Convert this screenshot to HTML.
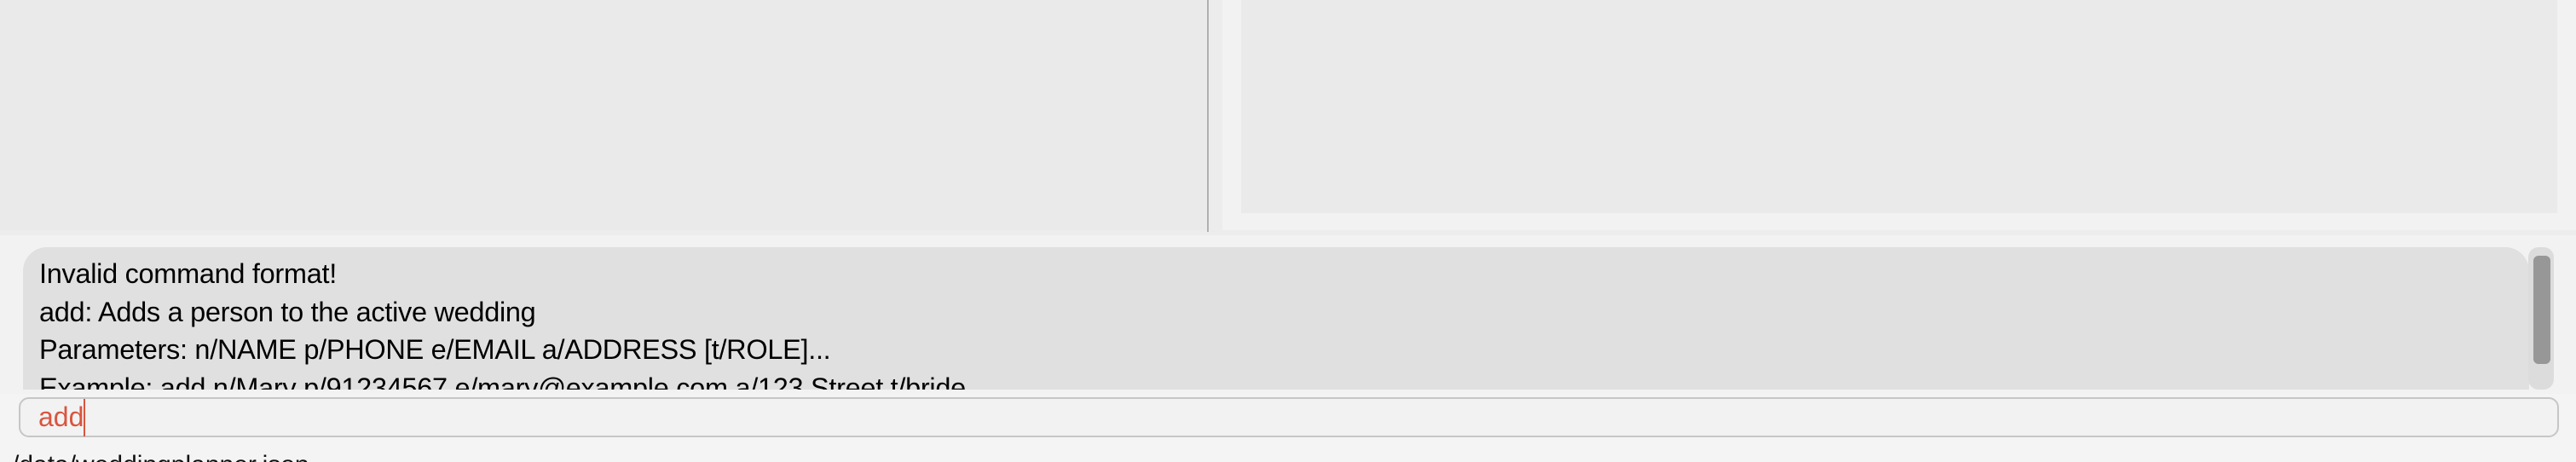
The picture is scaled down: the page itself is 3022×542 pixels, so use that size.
<!DOCTYPE html>
<html><head><meta charset="utf-8"><style>
html,body{margin:0;padding:0;width:3022px;height:542px;overflow:hidden;}
#w{position:relative;width:3022px;height:542px;overflow:hidden;background:#f4f4f4;font-family:"Liberation Sans",sans-serif;}
#w div{position:absolute;box-sizing:border-box;}
</style></head><body><div id="w">
<div style="left:0;top:0;width:3022px;height:276px;background:#ececec"></div>
<div style="left:0;top:0;width:1414px;height:270px;background:#eaeaea"></div>
<div style="left:1416px;top:0;width:2px;height:272px;background:#b0b0b0"></div>
<div style="left:1434px;top:0;width:1588px;height:270px;background:#f2f2f2"></div>
<div style="left:1456px;top:0;width:1544px;height:250px;background:#eaeaea"></div>
<div style="left:0;top:276px;width:3022px;height:186px;background:#f2f2f2"></div>
<div style="left:27px;top:290px;width:2940px;height:167px;background:#e0e0e0;border-radius:28px 28px 0 0;overflow:hidden">
  <div style="left:19px;top:9px;font-size:32.5px;letter-spacing:-0.3px;line-height:44.5px;color:#000;white-space:nowrap">Invalid command format!<br>add: Adds a person to the active wedding<br>Parameters: n/NAME p/PHONE e/EMAIL a/ADDRESS [t/ROLE]...<br>Example: add n/Mary p/91234567 e/mary@example.com a/123 Street t/bride</div>
</div>
<div style="left:2966px;top:290px;width:30px;height:167px;background:#dcdcdc;border-radius:12px"></div>
<div style="left:2972px;top:300px;width:20px;height:127px;background:#979797;border-radius:6px"></div>
<div style="left:22px;top:466px;width:2980px;height:47px;background:#f2f2f2;border:2px solid #c6c6c6;border-radius:12px"></div>
<div style="left:45px;top:468px;font-size:32px;line-height:42px;color:#d9553e">add</div>
<div style="left:98px;top:468px;width:2px;height:44px;background:#d9553e"></div>
<div style="left:14px;top:531px;font-size:30px;line-height:30px;color:#111;white-space:nowrap">/data/weddingplanner.json</div>
</div></body></html>
